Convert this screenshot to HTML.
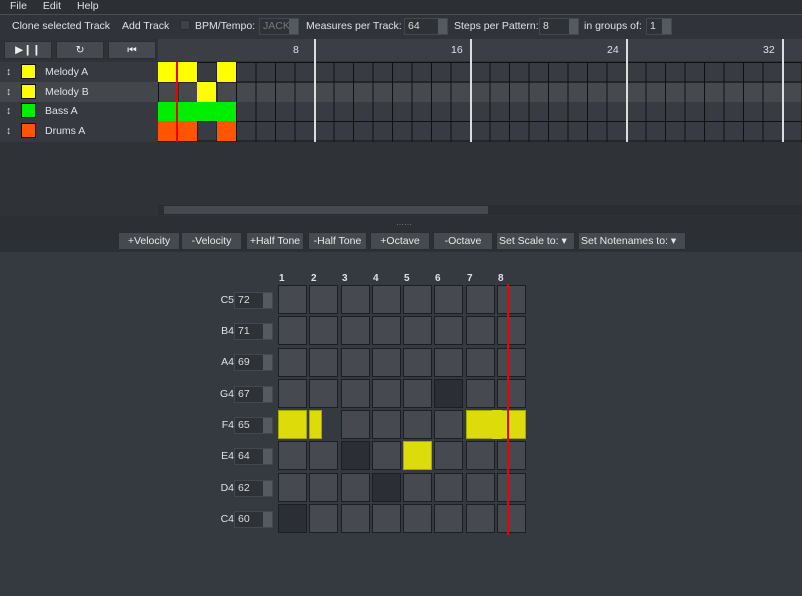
<!DOCTYPE html><html><head><style>
*{margin:0;padding:0;box-sizing:border-box}
body{width:802px;height:596px;background:#353a41;font-family:"Liberation Sans","DejaVu Sans",sans-serif;font-size:10.5px;color:#dfe1e4;position:relative;overflow:hidden}
.a{position:absolute}
.menu{left:0;top:0;width:802px;height:14px;background:#2c2f34}
.menu span{margin-left:10px;margin-right:6px;line-height:13px}
.tb{left:0;top:14px;width:802px;height:25px;background:#30343a;border-top:1px solid #4a4e54}
.spin{background:#2e3237;border:1px solid #44484e;color:#ddd;height:17px;line-height:15px;padding-left:3px}
.spin i{position:absolute;right:0;top:0;width:9px;height:15px;background:#555a61}
.top{left:0;top:39px;width:802px;height:177px;background:#2f3338}
.btn{background:#464a50;border:1px solid #2a2d31;color:#eee;text-align:center}
.g{display:grid;grid-template-columns:repeat(8,29px);column-gap:2.3px;row-gap:2.3px}
.g div{height:29px;background:#464a50;border:1px solid #1c1e21}
.g .d{background:#2b2f35}.g .y{background:#dcdc0a;border-color:#aaa400}
.bb{background:#464a50;border:1px solid #2a2d31;height:18px;line-height:16px;text-align:center;color:#e8e8e8}
.nl{left:218px;width:16px;text-align:right}
</style></head><body>
<div class="a menu"><span>File</span><span>Edit</span><span>Help</span></div>
<div class="a tb">
<div class="a" style="left:12px;top:5px">Clone selected Track</div>
<div class="a" style="left:122px;top:5px">Add Track</div>
<div class="a" style="left:180px;top:5px;width:10px;height:10px;background:#3e4248;border:1px solid #2a2d31"></div>
<div class="a" style="left:195px;top:5px">BPM/Tempo:</div>
<div class="a spin" style="left:259px;top:3px;width:40px;color:#777">JACK<i></i></div>
<div class="a" style="left:306px;top:5px">Measures per Track:</div>
<div class="a spin" style="left:404px;top:3px;width:44px">64<i></i></div>
<div class="a" style="left:454px;top:5px">Steps per Pattern:</div>
<div class="a spin" style="left:539px;top:3px;width:40px">8<i></i></div>
<div class="a" style="left:584px;top:5px">in groups of:</div>
<div class="a spin" style="left:646px;top:3px;width:26px">1<i></i></div>
</div>
<div class="a top">
<div class="a btn" style="left:4px;top:2px;width:48px;height:18px;line-height:16px">▶❙❙</div>
<div class="a btn" style="left:56px;top:2px;width:48px;height:18px;line-height:16px">↻</div>
<div class="a btn" style="left:108px;top:2px;width:48px;height:18px;line-height:16px">⏮</div>
<div class="a" style="left:158px;top:0;width:644px;height:22px;background:#3b3f45"></div>
<div class="a" style="left:293px;top:5px">8</div><div class="a" style="left:451px;top:5px">16</div><div class="a" style="left:607px;top:5px">24</div><div class="a" style="left:763px;top:5px">32</div>
<div class="a" style="left:0;top:23px;width:158px;height:80px;background:#363a40"></div>
<div class="a" style="left:0;top:43px;width:158px;height:20px;background:#43474c"></div>
<div class="a" style="left:158px;top:23px;width:644px;height:80px;background:repeating-linear-gradient(90deg,#111 0 1px,transparent 1px 19.5px),repeating-linear-gradient(180deg,#111 0 1px,transparent 1px 19.6px),#383c42"></div>
<div class="a" style="left:158px;top:44px;width:644px;height:19px;background:repeating-linear-gradient(90deg,#111 0 1px,#46494e 1px 19.5px)"></div>
<div class="a" style="left:314px;top:0;width:2px;height:103px;background:#ddd"></div>
<div class="a" style="left:470px;top:0;width:2px;height:103px;background:#ddd"></div>
<div class="a" style="left:626px;top:0;width:2px;height:103px;background:#ddd"></div>
<div class="a" style="left:782px;top:0;width:2px;height:103px;background:#ddd"></div>
<div class="a" style="left:6px;top:27px">↕</div><div class="a" style="left:6px;top:47px">↕</div><div class="a" style="left:6px;top:66px">↕</div><div class="a" style="left:6px;top:86px">↕</div>
<div class="a" style="left:21px;top:25px;width:15px;height:15px;background:#ff0;border:1px solid #111"></div>
<div class="a" style="left:21px;top:45px;width:15px;height:15px;background:#ff0;border:1px solid #111"></div>
<div class="a" style="left:21px;top:64px;width:15px;height:15px;background:#0e0;border:1px solid #111"></div>
<div class="a" style="left:21px;top:84px;width:15px;height:15px;background:#f50;border:1px solid #111"></div>
<div class="a" style="left:45px;top:27px">Melody A</div><div class="a" style="left:45px;top:47px">Melody B</div><div class="a" style="left:45px;top:66px">Bass A</div><div class="a" style="left:45px;top:86px">Drums A</div>
<div class="a" style="left:158px;top:23px;width:39px;height:20px;background:#ff0"></div>
<div class="a" style="left:217px;top:23px;width:19px;height:20px;background:#ff0"></div>
<div class="a" style="left:197px;top:43px;width:19px;height:20px;background:#ff0"></div>
<div class="a" style="left:158px;top:63px;width:78px;height:19px;background:#0e0"></div>
<div class="a" style="left:158px;top:82px;width:39px;height:20px;background:#f50"></div>
<div class="a" style="left:217px;top:82px;width:19px;height:20px;background:#f50"></div>
<div class="a" style="left:176px;top:23px;width:2px;height:80px;background:#e00"></div>
<div class="a" style="left:158px;top:166px;width:644px;height:10px;background:#2a2d31"></div>
<div class="a" style="left:164px;top:167px;width:324px;height:8px;background:#464a50"></div>
</div>
<div class="a" style="left:0;top:216px;width:802px;height:36px;background:#2c2f34"></div>
<div class="a" style="left:396px;top:218px;color:#888;font-size:8px">……</div>
<div class="a bb" style="left:118px;top:232px;width:62px">+Velocity</div>
<div class="a bb" style="left:181px;top:232px;width:61px">-Velocity</div>
<div class="a bb" style="left:246px;top:232px;width:58px">+Half Tone</div>
<div class="a bb" style="left:308px;top:232px;width:59px">-Half Tone</div>
<div class="a bb" style="left:370px;top:232px;width:60px">+Octave</div>
<div class="a bb" style="left:433px;top:232px;width:60px">-Octave</div>
<div class="a bb" style="left:496px;top:232px;width:79px;text-align:left;padding-left:2px">Set Scale to: ▾</div>
<div class="a bb" style="left:578px;top:232px;width:108px;text-align:left;padding-left:2px">Set Notenames to: ▾</div>
<div class="a" style="left:279px;top:273px;font-weight:bold;font-size:10px">1</div><div class="a" style="left:311px;top:273px;font-weight:bold;font-size:10px">2</div><div class="a" style="left:342px;top:273px;font-weight:bold;font-size:10px">3</div><div class="a" style="left:373px;top:273px;font-weight:bold;font-size:10px">4</div><div class="a" style="left:404px;top:273px;font-weight:bold;font-size:10px">5</div><div class="a" style="left:435px;top:273px;font-weight:bold;font-size:10px">6</div><div class="a" style="left:467px;top:273px;font-weight:bold;font-size:10px">7</div><div class="a" style="left:498px;top:273px;font-weight:bold;font-size:10px">8</div>
<div class="a nl" style="top:294px">C5</div><div class="a spin" style="left:234px;top:292px;width:39px">72<i></i></div>
<div class="a nl" style="top:325px">B4</div><div class="a spin" style="left:234px;top:323px;width:39px">71<i></i></div>
<div class="a nl" style="top:356px">A4</div><div class="a spin" style="left:234px;top:354px;width:39px">69<i></i></div>
<div class="a nl" style="top:388px">G4</div><div class="a spin" style="left:234px;top:386px;width:39px">67<i></i></div>
<div class="a nl" style="top:419px">F4</div><div class="a spin" style="left:234px;top:417px;width:39px">65<i></i></div>
<div class="a nl" style="top:450px">E4</div><div class="a spin" style="left:234px;top:448px;width:39px">64<i></i></div>
<div class="a nl" style="top:482px">D4</div><div class="a spin" style="left:234px;top:480px;width:39px">62<i></i></div>
<div class="a nl" style="top:513px">C4</div><div class="a spin" style="left:234px;top:511px;width:39px">60<i></i></div>
<div class="a g" style="left:278px;top:285px">
<div></div><div></div><div></div><div></div><div></div><div></div><div></div><div></div>
<div></div><div></div><div></div><div></div><div></div><div></div><div></div><div></div>
<div></div><div></div><div></div><div></div><div></div><div></div><div></div><div></div>
<div></div><div></div><div></div><div></div><div></div><div class="d"></div><div></div><div></div>
<div class="y"></div><div style="background:transparent;border:none"></div><div></div><div></div><div></div><div></div><div class="y"></div><div class="y"></div>
<div></div><div></div><div class="d"></div><div></div><div class="y"></div><div></div><div></div><div></div>
<div></div><div></div><div></div><div class="d"></div><div></div><div></div><div></div><div></div>
<div class="d"></div><div></div><div></div><div></div><div></div><div></div><div></div><div></div>
</div>
<div class="a" style="left:309px;top:410px;width:13px;height:29px;background:#dcdc0a;border:1px solid #aaa400"></div>
<div class="a" style="left:492px;top:410px;width:10px;height:29px;background:#dcdc0a"></div>
<div class="a" style="left:507px;top:284px;width:2px;height:251px;background:#e00"></div>
</body></html>
